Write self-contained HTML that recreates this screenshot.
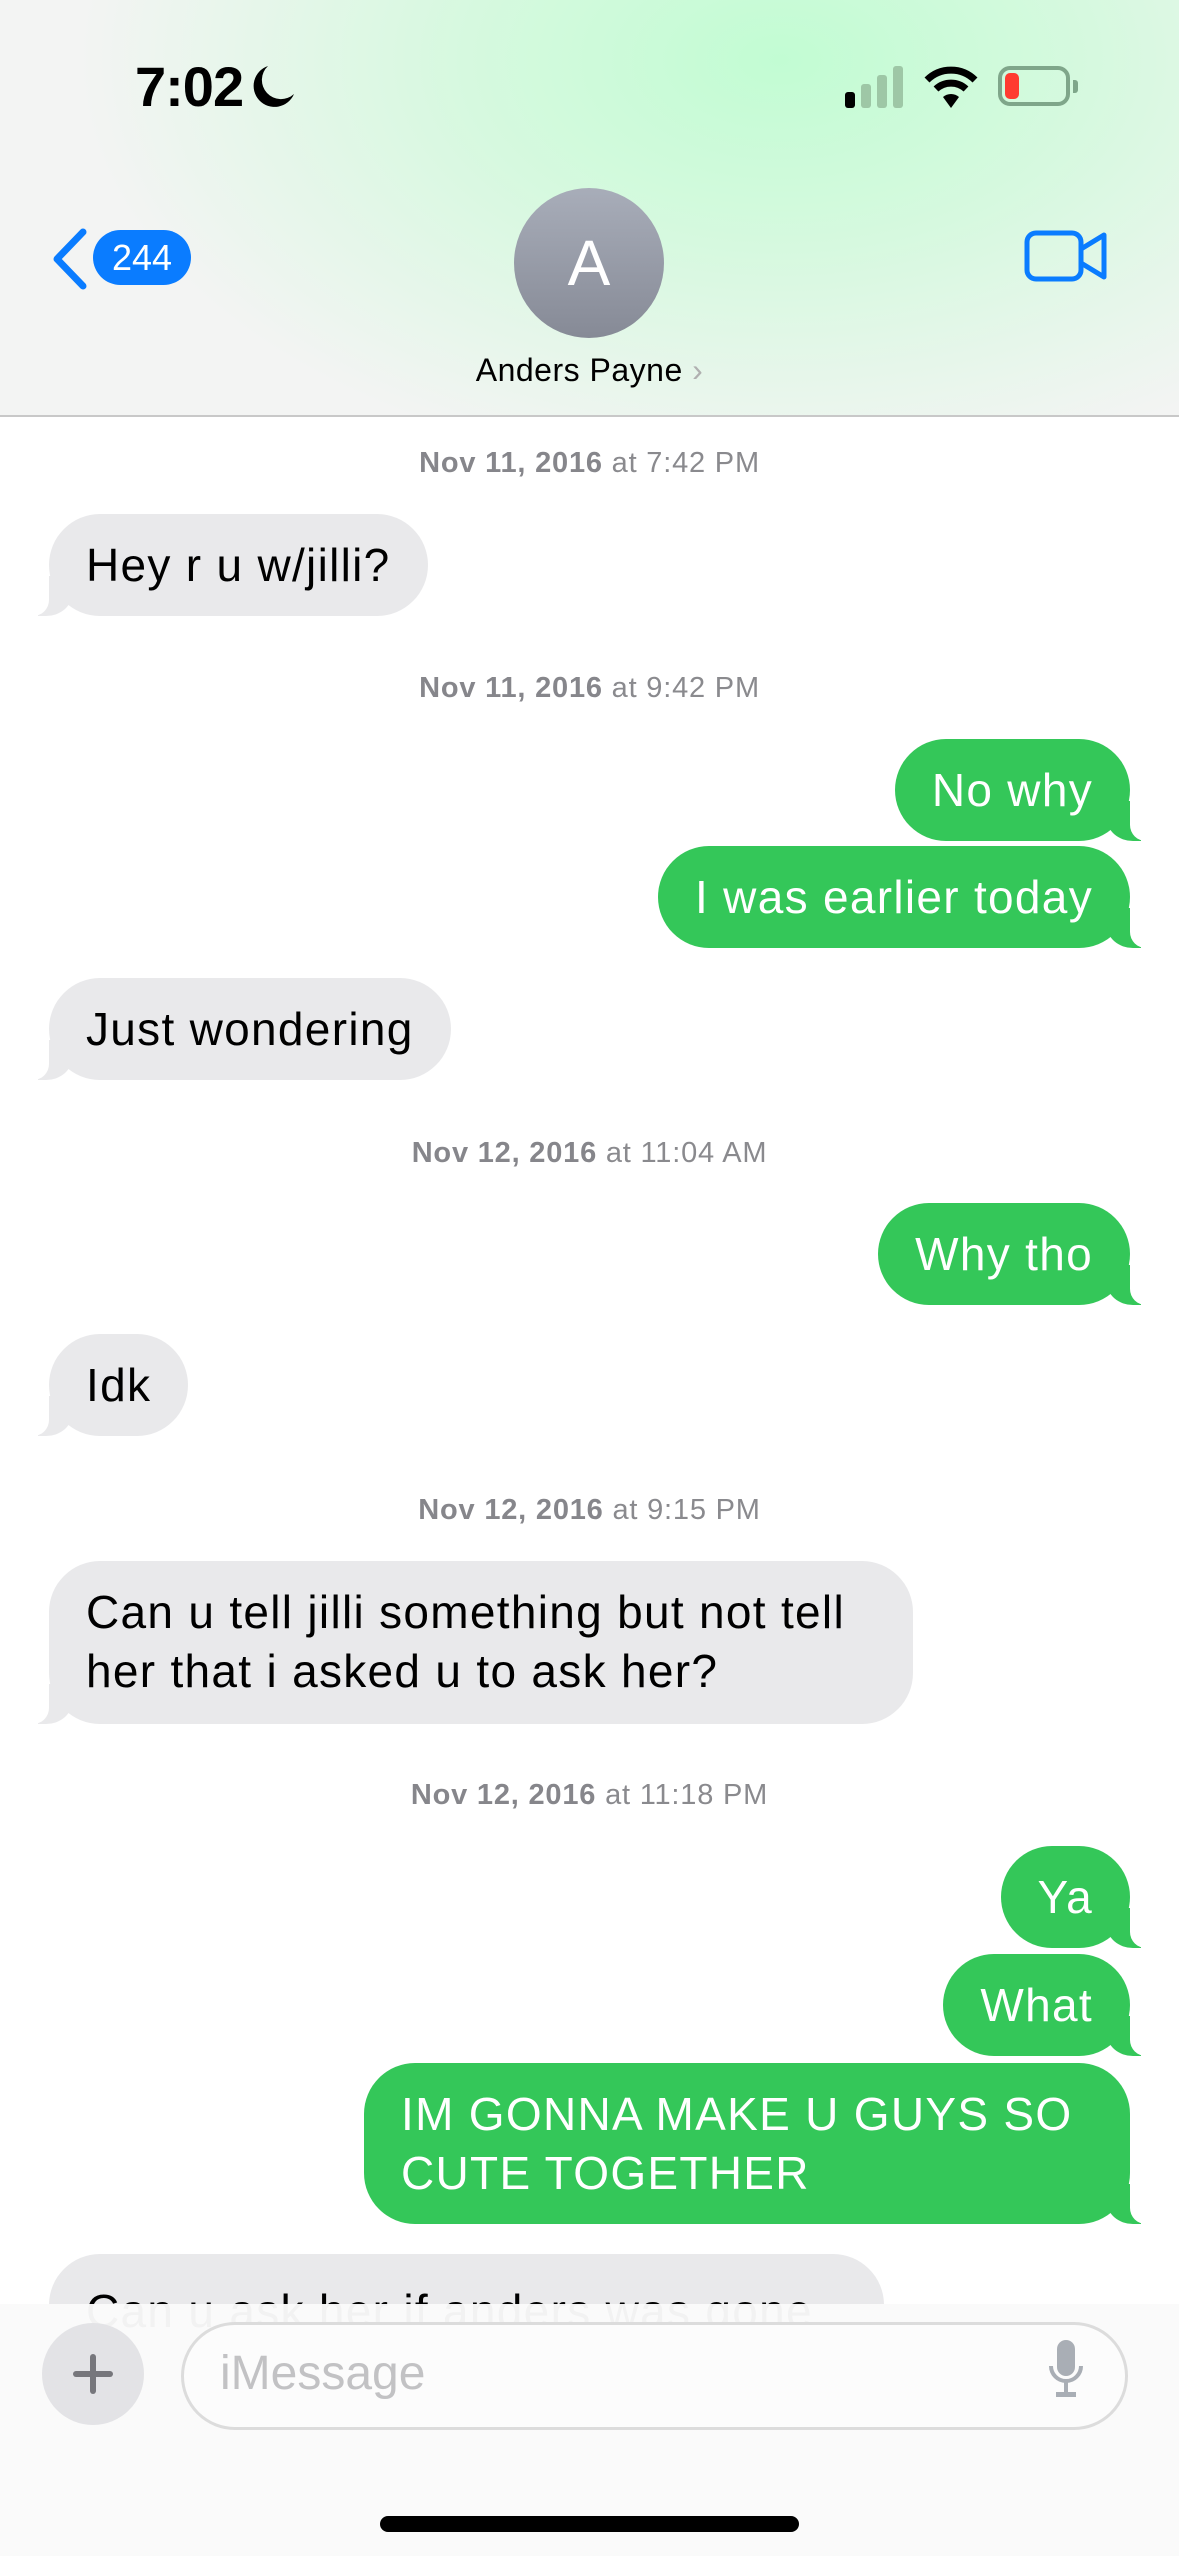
<!DOCTYPE html>
<html><head><meta charset="utf-8"><style>
*{margin:0;padding:0;box-sizing:border-box}
body{width:1179px;height:2556px;overflow:hidden;background:#fff;font-family:"Liberation Sans",sans-serif;position:relative}
.hdr{position:absolute;left:0;top:0;width:1179px;height:417px;background:radial-gradient(ellipse 700px 420px at 780px 60px,#c2fcd3 0%,#d6f9df 45%,#f3f4f3 100%);border-bottom:2px solid #c8c8c8}
.time{position:absolute;left:135px;top:54px;font-size:56px;font-weight:bold;letter-spacing:-1px}
.ts{position:absolute;width:1179px;text-align:center;font-size:29px;color:#8a8a8e;letter-spacing:0.8px}
.ts b{font-weight:bold;color:#86868b}
.b{position:absolute;height:102px;border-radius:51px;font-size:46px;letter-spacing:1.3px;line-height:102px;padding:0 37px;white-space:nowrap}
.in{background:#e9e9eb;color:#000}
.out{background:#34c759;color:#fff}
.in::before{content:"";position:absolute;left:-11px;bottom:0;width:34px;height:40px;background:#e9e9eb;border-bottom-right-radius:26px 22px}
.in::after{content:"";position:absolute;left:-42px;bottom:0;width:42px;height:40px;background:#fff;border-bottom-right-radius:16px}
.out::before{content:"";position:absolute;right:-11px;bottom:0;width:34px;height:40px;background:#34c759;border-bottom-left-radius:26px 22px}
.out::after{content:"";position:absolute;right:-42px;bottom:0;width:42px;height:40px;background:#fff;border-bottom-left-radius:16px}
</style></head><body>
<div class="hdr">
<div class="time">7:02</div>
<svg style="position:absolute;left:250px;top:64px" width="46" height="46" viewBox="0 0 46 46"><path d="M18 2 A21 21 0 1 0 44 30 A17 17 0 0 1 18 2Z" fill="#000"/></svg>
<svg style="position:absolute;left:845px;top:66px" width="60" height="42"><rect x="0" y="26" width="10" height="16" rx="3" fill="#000"/><rect x="16" y="18" width="10" height="24" rx="3" fill="#9ec7a6"/><rect x="32" y="9" width="10" height="33" rx="3" fill="#9ec7a6"/><rect x="48" y="0" width="10" height="42" rx="3" fill="#9ec7a6"/></svg>
<svg style="position:absolute;left:924px;top:64px" width="54" height="46" viewBox="0 0 54 46"><path d="M3 16 A34 34 0 0 1 51 16" stroke="#000" stroke-width="7" fill="none"/><path d="M12 25 A22 22 0 0 1 42 25" stroke="#000" stroke-width="7" fill="none"/><path d="M19 33 L27 44 L35 33 A12 12 0 0 0 19 33Z" fill="#000"/></svg>
<div style="position:absolute;left:998px;top:66px;width:72px;height:40px;border:4px solid #7fa68a;border-radius:12px"></div>
<div style="position:absolute;left:1005px;top:73px;width:14px;height:26px;background:#ff3b30;border-radius:5px"></div>
<div style="position:absolute;left:1073px;top:80px;width:5px;height:13px;background:#7fa68a;border-radius:0 3px 3px 0"></div>
<svg style="position:absolute;left:49px;top:228px" width="40" height="62"><path d="M34 4 L8 31 L34 58" stroke="#0a7cff" stroke-width="7" fill="none" stroke-linecap="round" stroke-linejoin="round"/></svg>
<div style="position:absolute;left:93px;top:230px;width:98px;height:55px;background:#0a7cff;border-radius:28px;color:#fff;font-size:36px;line-height:55px;text-align:center">244</div>
<div style="position:absolute;left:514px;top:188px;width:150px;height:150px;border-radius:50%;background:linear-gradient(#a8adb9,#868a96);color:#fff;font-size:64px;line-height:150px;text-align:center">A</div>
<div style="position:absolute;left:0;width:1179px;top:352px;text-align:center;font-size:32px;letter-spacing:0.5px;color:#000">Anders Payne <span style="color:#b0b0b0">›</span></div>
<svg style="position:absolute;left:1024px;top:230px" width="86" height="52"><rect x="3" y="3" width="54" height="46" rx="9" stroke="#0a7cff" stroke-width="5" fill="none"/><path d="M57 19 L80 5 L80 47 L57 33Z" stroke="#0a7cff" stroke-width="5" fill="none" stroke-linejoin="round"/></svg>
</div>

<div class="ts" style="top:447px"><b>Nov 11, 2016</b> at 7:42 PM</div>
<div class="b in" style="left:49px;top:514px">Hey r u w/jilli?</div>
<div class="ts" style="top:672px"><b>Nov 11, 2016</b> at 9:42 PM</div>
<div class="b out" style="right:49px;top:739px">No why</div>
<div class="b out" style="right:49px;top:846px">I was earlier today</div>
<div class="b in" style="left:49px;top:978px">Just wondering</div>
<div class="ts" style="top:1137px"><b>Nov 12, 2016</b> at 11:04 AM</div>
<div class="b out" style="right:49px;top:1203px">Why tho</div>
<div class="b in" style="left:49px;top:1334px">Idk</div>
<div class="ts" style="top:1494px"><b>Nov 12, 2016</b> at 9:15 PM</div>
<div class="b in" style="left:49px;top:1561px;width:864px;height:163px;line-height:59px;padding-top:22px">Can u tell jilli something but not tell<br>her that i asked u to ask her?</div>
<div class="ts" style="top:1779px"><b>Nov 12, 2016</b> at 11:18 PM</div>
<div class="b out" style="right:49px;top:1846px">Ya</div>
<div class="b out" style="right:49px;top:1954px">What</div>
<div class="b out" style="left:364px;width:766px;top:2063px;height:161px;line-height:59px;padding-top:22px">IM GONNA MAKE U GUYS SO<br>CUTE TOGETHER</div>
<div class="b in" style="left:49px;width:835px;top:2254px;height:163px;line-height:59px;padding-top:28px">Can u ask her if anders was gone</div>

<div style="position:absolute;left:0;top:2304px;width:1179px;height:252px;background:radial-gradient(ellipse 260px 200px at 1050px 580px,#d4f5dc 0%,rgba(250,250,250,0) 100%),rgba(250,250,250,0.97)"></div>
<div style="position:absolute;left:42px;top:2323px;width:102px;height:102px;border-radius:50%;background:#e3e3e6"></div>
<div style="position:absolute;left:73px;top:2371px;width:40px;height:6px;background:#77777c;border-radius:3px"></div>
<div style="position:absolute;left:90px;top:2354px;width:6px;height:40px;background:#77777c;border-radius:3px"></div>
<div style="position:absolute;left:181px;top:2322px;width:947px;height:108px;border:3px solid #dcdcdc;border-radius:54px;background:#fcfcfc"></div>
<div style="position:absolute;left:220px;top:2346px;font-size:48px;color:#c2c2c4">iMessage</div>
<svg style="position:absolute;left:1046px;top:2338px" width="40" height="64"><rect x="11" y="2" width="18" height="36" rx="9" fill="#a9aeb5"/><path d="M5 28 A15 15 0 0 0 35 28" stroke="#a9aeb5" stroke-width="4" fill="none"/><rect x="18" y="44" width="4" height="12" fill="#a9aeb5"/><rect x="10" y="54" width="20" height="5" fill="#a9aeb5"/></svg>
<div style="position:absolute;left:380px;top:2516px;width:419px;height:16px;border-radius:8px;background:#000"></div>
</body></html>
